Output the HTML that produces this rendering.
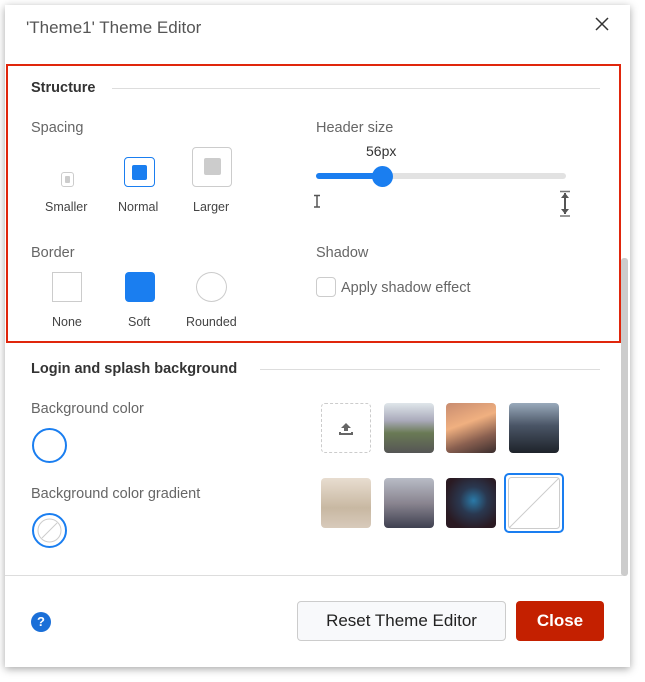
<!DOCTYPE html>
<html><head><style>
*{box-sizing:border-box;margin:0;padding:0}
body{width:645px;height:682px;background:#fff;font-family:"Liberation Sans",sans-serif;position:relative;overflow:hidden}
.dlg{position:absolute;left:5px;top:5px;width:625px;height:662px;background:#fff;box-shadow:0 2px 8px rgba(0,0,0,.35)}
.a{position:absolute;white-space:nowrap}
.title{left:26px;top:18px;font-size:17px;color:#555}
.lbl{font-size:14.5px;color:#666}
.sec{font-size:14.5px;font-weight:bold;color:#333}
.sm{font-size:12.5px;color:#444}
.line{position:absolute;height:1px;background:#ddd}
.img{position:absolute;width:50px;height:50px;border-radius:4px}
</style></head><body>
<div class="dlg"></div>
<div class="a title">'Theme1' Theme Editor</div>
<svg class="a" style="left:594px;top:16px" width="16" height="16"><path d="M2 2L14 14M14 2L2 14" stroke="#333" stroke-width="1.5"/></svg>
<div class="a" style="left:6px;top:64px;width:615px;height:279px;border:2px solid #e0260c"></div>
<div class="a" style="left:621px;top:258px;width:7px;height:318px;background:#ccc;border-radius:3px"></div>

<div class="a sec" style="left:31px;top:80px">Structure</div>
<div class="line" style="left:112px;top:88px;width:488px"></div>
<div class="a lbl" style="left:31px;top:120px">Spacing</div>
<div class="a" style="left:61px;top:172px;width:13px;height:15px;border:1px solid #ccc;border-radius:3px"><div style="margin:3px auto;width:5px;height:7px;background:#ccc;border-radius:1px"></div></div>
<div class="a" style="left:124px;top:157px;width:31px;height:30px;border:1px solid #1a7ef0;border-radius:4px"><div style="margin:7px auto;width:15px;height:15px;background:#1a7ef0;border-radius:2px"></div></div>
<div class="a" style="left:192px;top:147px;width:40px;height:40px;border:1px solid #ccc;border-radius:4px"><div style="margin:10px auto;width:17px;height:17px;background:#ccc;border-radius:2px"></div></div>
<div class="a sm" style="left:45px;top:200px">Smaller</div>
<div class="a sm" style="left:118px;top:200px">Normal</div>
<div class="a sm" style="left:193px;top:200px">Larger</div>

<div class="a lbl" style="left:316px;top:120px">Header size</div>
<div class="a" style="left:366px;top:143px;font-size:14px;color:#333">56px</div>
<div class="a" style="left:316px;top:173px;width:250px;height:6px;background:#e2e2e2;border-radius:3px"></div>
<div class="a" style="left:316px;top:173px;width:66px;height:6px;background:#1a7ef0;border-radius:3px"></div>
<div class="a" style="left:372px;top:166px;width:21px;height:21px;background:#1a7ef0;border-radius:50%"></div>
<svg class="a" style="left:312px;top:194px" width="10" height="15"><path d="M2 1.5H8M2 13H8M5 1.5V13" stroke="#555" stroke-width="1.5"/></svg>
<svg class="a" style="left:558px;top:190px" width="14" height="28"><path d="M2 1.5H12M2 26H12" stroke="#777" stroke-width="1.5"/><path d="M7 3V24" stroke="#555" stroke-width="2"/><path d="M3 8L7 3L11 8ZM3 19L7 24L11 19Z" fill="#555"/></svg>

<div class="a lbl" style="left:31px;top:245px">Border</div>
<div class="a" style="left:52px;top:272px;width:30px;height:30px;border:1px solid #ccc"></div>
<div class="a" style="left:125px;top:272px;width:30px;height:30px;background:#1a7ef0;border-radius:4px"></div>
<div class="a" style="left:196px;top:272px;width:31px;height:30px;border:1px solid #ccc;border-radius:50%"></div>
<div class="a sm" style="left:52px;top:315px">None</div>
<div class="a sm" style="left:128px;top:315px">Soft</div>
<div class="a sm" style="left:186px;top:315px">Rounded</div>
<div class="a lbl" style="left:316px;top:245px">Shadow</div>
<div class="a" style="left:316px;top:277px;width:20px;height:20px;border:1px solid #ccc;border-radius:4px"></div>
<div class="a lbl" style="left:341px;top:280px">Apply shadow effect</div>

<div class="a sec" style="left:31px;top:361px">Login and splash background</div>
<div class="line" style="left:260px;top:369px;width:340px"></div>
<div class="a lbl" style="left:31px;top:401px">Background color</div>
<div class="a" style="left:32px;top:428px;width:35px;height:35px;border:2px solid #1a7ef0;border-radius:50%"></div>
<div class="a lbl" style="left:31px;top:486px">Background color gradient</div>
<div class="a" style="left:32px;top:513px;width:35px;height:35px;border:2px solid #1a7ef0;border-radius:50%;padding:3px"><svg width="25" height="25" style="display:block"><circle cx="12.5" cy="12.5" r="11.5" fill="none" stroke="#ccc"/><path d="M5 20L20 5" stroke="#ccc"/></svg></div>

<div class="a" style="left:321px;top:403px;width:50px;height:50px;border:1px dashed #ccc;border-radius:4px"></div>
<svg class="a" style="left:338px;top:420px" width="16" height="16"><path d="M8 3L3 8H6V11H10V8H13Z" fill="#666"/><path d="M2 12V14H14V12" stroke="#666" stroke-width="2" fill="none"/></svg>
<div class="img" style="left:384px;top:403px;background:linear-gradient(180deg,#dfe6ea 0%,#aab 35%,#6a7a55 60%,#555 100%)"></div>
<div class="img" style="left:446px;top:403px;background:linear-gradient(160deg,#c88c70,#f0b080 40%,#8a6050 70%,#3a2d2d)"></div>
<div class="img" style="left:509px;top:403px;background:linear-gradient(180deg,#9ab 0%,#4a5566 45%,#1e232a 100%)"></div>
<div class="img" style="left:321px;top:478px;background:linear-gradient(180deg,#e8ddd0,#c8b8a2 60%,#d8cabb)"></div>
<div class="img" style="left:384px;top:478px;background:linear-gradient(180deg,#b8bcc6,#8a8590 50%,#3e4050)"></div>
<div class="img" style="left:446px;top:478px;background:radial-gradient(circle at 55% 45%,#2a7aa8 0%,#2a3850 35%,#2a1a22 75%)"></div>
<div class="a" style="left:504px;top:473px;width:60px;height:60px;border:2px solid #1a7ef0;border-radius:5px;padding:2px"><svg width="52" height="52" style="display:block"><rect x=".5" y=".5" width="51" height="51" rx="3" fill="#fff" stroke="#ccc"/><path d="M1 51L51 1" stroke="#ccc"/></svg></div>

<div class="line" style="left:5px;top:575px;width:618px"></div>
<div class="a" style="left:31px;top:612px;width:20px;height:20px;border-radius:50%;background:#1a6fd8;color:#fff;font-weight:bold;font-size:13px;text-align:center;line-height:20px">?</div>
<div class="a" style="left:297px;top:601px;width:209px;height:40px;border:1px solid #ccc;border-radius:4px;background:#f8f9fb;font-size:17px;color:#222;text-align:center;line-height:38px">Reset Theme Editor</div>
<div class="a" style="left:516px;top:601px;width:88px;height:40px;border-radius:4px;background:#c42000;color:#fff;font-size:17px;font-weight:bold;text-align:center;line-height:40px">Close</div>
</body></html>
